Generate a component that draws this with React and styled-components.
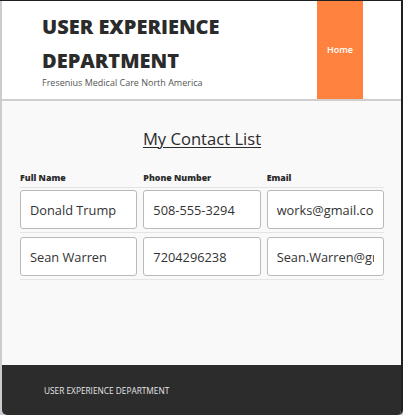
import React from "react";
import styled, { createGlobalStyle } from "styled-components";

const contacts = [
  { name: "Donald Trump", phone: "508-555-3294", email: "works@gmail.com" },
  { name: "Sean Warren", phone: "7204296238", email: "Sean.Warren@gmail.com" },
];

function App() {
  return (
    <>
      <GlobalStyle />
      <Frame>
        <Window>
          <Header>
            <Brand>
              <Title>USER EXPERIENCE DEPARTMENT</Title>
              <Subtitle>Fresenius Medical Care North America</Subtitle>
            </Brand>
            <Nav>
              <NavItem>Home</NavItem>
            </Nav>
          </Header>
          <Main>
            <PageTitle>My Contact List</PageTitle>
            <Table>
              <HeadRow>
                <Label>Full Name</Label>
                <Label>Phone Number</Label>
                <Label>Email</Label>
              </HeadRow>
              {contacts.map((c) => (
                <Row key={c.phone}>
                  <Field defaultValue={c.name} />
                  <Field defaultValue={c.phone} />
                  <Field defaultValue={c.email} />
                </Row>
              ))}
            </Table>
          </Main>
          <Footer>USER EXPERIENCE DEPARTMENT</Footer>
        </Window>
      </Frame>
    </>
  );
}

export default App;

const GlobalStyle = createGlobalStyle`
  html, body {
    margin: 0;
    padding: 0;
    background: #c9ccd0;
  }
  * {
    box-sizing: border-box;
  }
`;

const Frame = styled.div`
  width: 403px;
  height: 415px;
  padding-left: 2px;
  border-top: 1px solid #1f2023;
  background: #c9ccd0;
  font-family: "Open Sans", "Liberation Sans", sans-serif;
  overflow: hidden;
`;

const Window = styled.div`
  display: flex;
  flex-direction: column;
  height: 100%;
  border-right: 2px solid #1f2023;
  border-bottom-right-radius: 5px;
  border-bottom-left-radius: 5px;
  overflow: hidden;
  background: #f9f9f9;
`;

const Header = styled.header`
  display: flex;
  justify-content: space-between;
  height: 100px;
  padding-left: 40px;
  padding-right: 38px;
  background: #fff;
  border-bottom: 2px solid #cfcfcf;
`;

const Brand = styled.div`
  padding-top: 9px;
`;

const Title = styled.h1`
  margin: 0;
  width: 200px;
  font-size: 20px;
  line-height: 34px;
  font-weight: 800;
  color: #2b2b2b;
`;

const Subtitle = styled.p`
  margin: -2px 0 0;
  font-size: 9px;
  color: #555;
`;

const Nav = styled.nav`
  display: flex;
`;

const NavItem = styled.a`
  display: flex;
  align-items: center;
  justify-content: center;
  width: 46px;
  background: #ff833e;
  color: #fff;
  font-size: 9px;
  font-weight: 600;
  padding-bottom: 2px;
`;

const Main = styled.main`
  flex: 1;
  padding: 26px 17px 0 18px;
`;

const PageTitle = styled.h2`
  margin: 0 0 22px;
  text-align: center;
  font-size: 16.6px;
  font-weight: 400;
  color: #2b2b2b;
  text-decoration: underline;
  text-underline-offset: 2px;
  text-decoration-thickness: 1px;
`;

const Table = styled.div`
  display: flex;
  flex-direction: column;
`;

const HeadRow = styled.div`
  display: grid;
  grid-template-columns: repeat(3, 1fr);
  column-gap: 6px;
  padding-bottom: 3px;
  border-bottom: 1px solid #e4e4e4;
`;

const Label = styled.span`
  font-size: 8.8px;
  font-weight: 800;
  color: #2b2b2b;
`;

const Row = styled.div`
  display: grid;
  grid-template-columns: repeat(3, 1fr);
  column-gap: 6px;
  padding: 2px 0 3px;
  border-bottom: 1px solid #e4e4e4;

  & + & {
    padding-top: 4px;
  }
`;

const Field = styled.input`
  width: 100%;
  height: 39px;
  padding: 0 9px;
  border: 1px solid #b9b9b9;
  border-radius: 3px;
  background: #fff;
  font-family: "Open Sans", "Liberation Sans", sans-serif;
  font-size: 12.8px;
  color: #333;
  outline: none;
`;

const Footer = styled.footer`
  height: 50px;
  padding: 20px 0 0 42px;
  background: #2c2c2c;
  color: #e6e6e6;
  font-size: 8.3px;
`;
